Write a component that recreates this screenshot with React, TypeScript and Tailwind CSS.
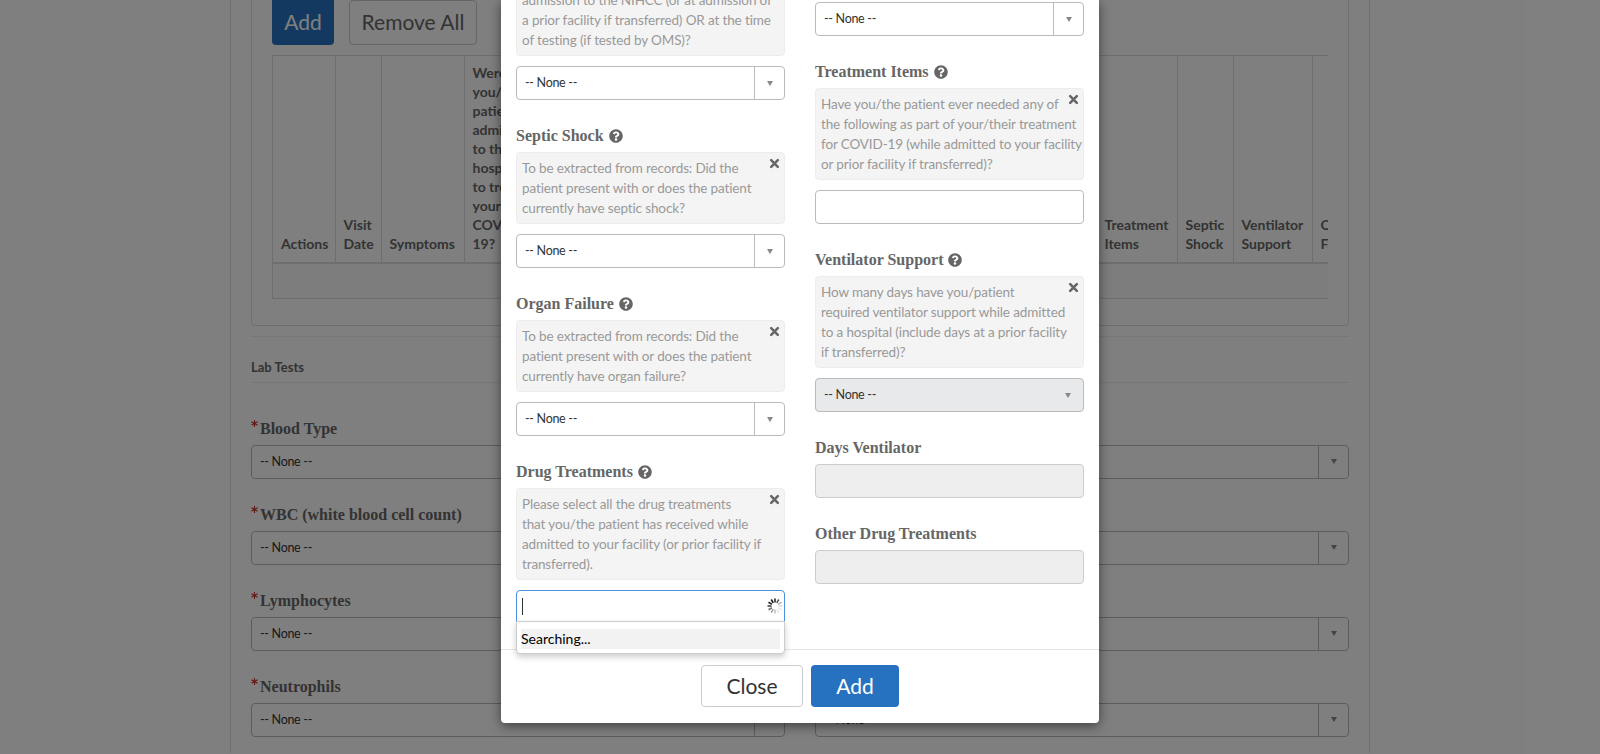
import { FaAsterisk, FaQuestionCircle } from "react-icons/fa";

const sans = "font-['Lato','Liberation_Sans',sans-serif]";
const serif = "font-['Liberation_Serif',serif]";

function Arrow() {
  return <span className="h-0 w-0 border-x-[3.5px] border-x-transparent border-t-[5px] border-t-[#888]" />;
}

function Select({ disabled }: { disabled?: boolean }) {
  return (
    <div
      className={`flex h-[34px] items-center rounded border border-[#bbb] text-[12.5px] tracking-[-0.3px] text-[#333] ${
        disabled ? "bg-[#e8e9ea]" : "bg-white"
      }`}
    >
      <span className="flex-1 pl-2 pt-px">-- None --</span>
      <span className={`flex h-full w-[30px] items-center justify-center ${disabled ? "" : "border-l border-[#bbb]"}`}>
        <Arrow />
      </span>
    </div>
  );
}

function Label({ text, help }: { text: string; help?: boolean }) {
  return (
    <div className={`${serif} mb-1 flex h-6 items-center gap-[5px] text-[16px] font-bold text-[#666]`}>
      {text}
      {help && <FaQuestionCircle className="size-[14px] text-[#666]" />}
    </div>
  );
}

function CloseX() {
  return (
    <svg viewBox="0 0 12 12" className="absolute right-[4px] top-[5px] size-[11px]">
      <path d="M2.4 2.4 9.6 9.6M9.6 2.4 2.4 9.6" stroke="#666" strokeWidth="2.8" strokeLinecap="round" fill="none" />
    </svg>
  );
}

function Help({ lines, noClose }: { lines: string[]; noClose?: boolean }) {
  return (
    <div className="relative mb-[10px] rounded border border-[#ececec] bg-[#f4f4f4] p-[5px] text-[13.5px] leading-5 tracking-[-0.13px] text-[#999]">
      {lines.map((l) => (
        <div key={l} className="whitespace-nowrap">{l}</div>
      ))}
      {!noClose && <CloseX />}
    </div>
  );
}

function Spinner() {
  const shades = [0.9, 0.7, 0.3, 0.15, 0.1, 0.1, 0.25, 0.4, 0.6, 0.8, 0.9, 1];
  return (
    <svg width="16" height="16" viewBox="0 0 16 16">
      {shades.map((o, i) => (
        <rect key={i} x="7.2" y="0.5" width="1.6" height="4" fill="#111" opacity={o} transform={`rotate(${i * 30} 8 8)`} />
      ))}
    </svg>
  );
}

function LabField({ text }: { text?: string }) {
  return (
    <div className="mb-6">
      <div className={`${serif} mb-1 flex h-6 items-center text-[16px] font-bold text-[#666]`}>
        {text && <FaAsterisk className="mb-[10px] mr-[2px] size-[7px] text-[#c9302c]" />}
        {text}
      </div>
      <Select />
    </div>
  );
}

function BackgroundPage() {
  const heads = [
    { t: "Actions", w: "w-[62px]" },
    { t: "Visit Date", w: "w-[46px]" },
    { t: "Symptoms", w: "w-[83px]" },
    { t: "Were you/ the patient admitted to the hospital to treat your COVID-19?", w: "w-[72px]" },
    { t: "", w: "w-[560px]" },
    { t: "Treatment Items", w: "w-[81px]" },
    { t: "Septic Shock", w: "w-[56px]" },
    { t: "Ventilator Support", w: "w-[79px]" },
    { t: "Other Facility", w: "w-[80px]" },
  ];
  return (
    <div className="mx-auto h-full w-[1140px] border-x border-[#ddd] px-5">
      <div className="-mt-px rounded-b border border-[#ddd] px-5 pb-[26px]">
        <div className="mb-[10px] flex gap-[15px] text-[21px]">
          <button className="flex h-[45px] w-[62px] items-center justify-center rounded-b bg-[#2672c0] pb-px text-white">Add</button>
          <button className="flex h-[45px] w-[128px] items-center justify-center rounded border border-[#ccc] bg-white pb-px text-[#666]">Remove All</button>
        </div>
        <div className="overflow-hidden border-l border-t border-[#ddd]">
          <table className="w-[1119px] table-fixed border-collapse text-[14px] font-bold leading-[19px] text-[#666]">
            <thead>
              <tr className="h-[207px] border-b-2 border-[#ddd]">
                {heads.map((h, i) => (
                  <th key={i} className={`${h.w} border-r border-[#ddd] px-2 pb-[9px] text-left align-bottom font-bold`}>
                    {h.t}
                  </th>
                ))}
              </tr>
            </thead>
            <tbody>
              <tr className="h-[35px] border-b border-[#ddd] bg-[#fafafa]">
                <td colSpan={9} />
              </tr>
            </tbody>
          </table>
        </div>
      </div>
      <div className="mt-[10px] h-[47px] border-y border-[#eee] pt-5 text-[13px] font-bold leading-5 text-[#666]">Lab Tests</div>
      <div className="mt-[34px] grid grid-cols-2 gap-x-[30px]">
        {["Blood Type", "", "WBC (white blood cell count)", "", "Lymphocytes", "", "Neutrophils", ""].map((t, i) => (
          <LabField key={i} text={t} />
        ))}
      </div>
    </div>
  );
}

function Modal() {
  return (
    <div className="relative mx-auto flex h-[723px] w-[598px] flex-col rounded-b bg-white shadow-[0_3px_12px_rgba(0,0,0,0.5)]">
      <div className="grid flex-1 grid-cols-2 gap-x-[30px] overflow-hidden px-[15px]">
        <div className="-mt-[16px]">
          <div className="mb-6">
            <Help noClose lines={["admission to the NIHCC (or at admission of", "a prior facility if transferred) OR at the time", "of testing (if tested by OMS)?"]} />
            <Select />
          </div>
          <div className="mb-6">
            <Label text="Septic Shock" help />
            <Help lines={["To be extracted from records: Did the", "patient present with or does the patient", "currently have septic shock?"]} />
            <Select />
          </div>
          <div className="mb-6">
            <Label text="Organ Failure" help />
            <Help lines={["To be extracted from records: Did the", "patient present with or does the patient", "currently have organ failure?"]} />
            <Select />
          </div>
          <div>
            <Label text="Drug Treatments" help />
            <Help lines={["Please select all the drug treatments", "that you/the patient has received while", "admitted to your facility (or prior facility if", "transferred)."]} />
            <div className="flex h-[32px] items-center rounded-t border border-[#4a90e2] bg-white pl-[5px] pr-[1px]">
              <span className="h-[17px] w-px flex-none bg-[#333]" />
              <span className="ml-auto"><Spinner /></span>
            </div>
          </div>
        </div>
        <div className="pt-[2px]">
          <div className="mb-6"><Select /></div>
          <div className="mb-6">
            <Label text="Treatment Items" help />
            <Help lines={["Have you/the patient ever needed any of", "the following as part of your/their treatment", "for COVID-19 (while admitted to your facility", "or prior facility if transferred)?"]} />
            <div className="h-[34px] rounded border border-[#bbb] bg-white" />
          </div>
          <div className="mb-6">
            <Label text="Ventilator Support" help />
            <Help lines={["How many days have you/patient", "required ventilator support while admitted", "to a hospital (include days at a prior facility", "if transferred)?"]} />
            <Select disabled />
          </div>
          <div className="mb-6">
            <Label text="Days Ventilator" />
            <div className="h-[34px] rounded border border-[#ccc] bg-[#eee]" />
          </div>
          <div>
            <Label text="Other Drug Treatments" />
            <div className="h-[34px] rounded border border-[#ccc] bg-[#eee]" />
          </div>
        </div>
      </div>
      <div className="absolute left-[15px] top-[621px] z-10 h-[33px] w-[269px] rounded-b border border-[#ccc] bg-white px-1 py-[7px] text-[14px] leading-5 text-black shadow-[0_3px_6px_rgba(0,0,0,0.2)]">
        <div className="bg-[#f2f2f2]">Searching...</div>
      </div>
      <div className="flex h-[74px] items-start justify-center gap-2 border-t border-[#e5e5e5] pt-[15px] text-[21px]">
        <button className="h-[42px] w-[102px] rounded border border-[#ccc] bg-white text-[#333]">Close</button>
        <button className="h-[42px] w-[88px] rounded bg-[#2672c0] text-white">Add</button>
      </div>
    </div>
  );
}

export default function App() {
  return (
    <div className={`${sans} relative h-[754px] w-[1600px] overflow-hidden bg-white`}>
      <BackgroundPage />
      <div className="absolute inset-0 bg-black/50" />
      <div className="absolute inset-0">
        <Modal />
      </div>
    </div>
  );
}
